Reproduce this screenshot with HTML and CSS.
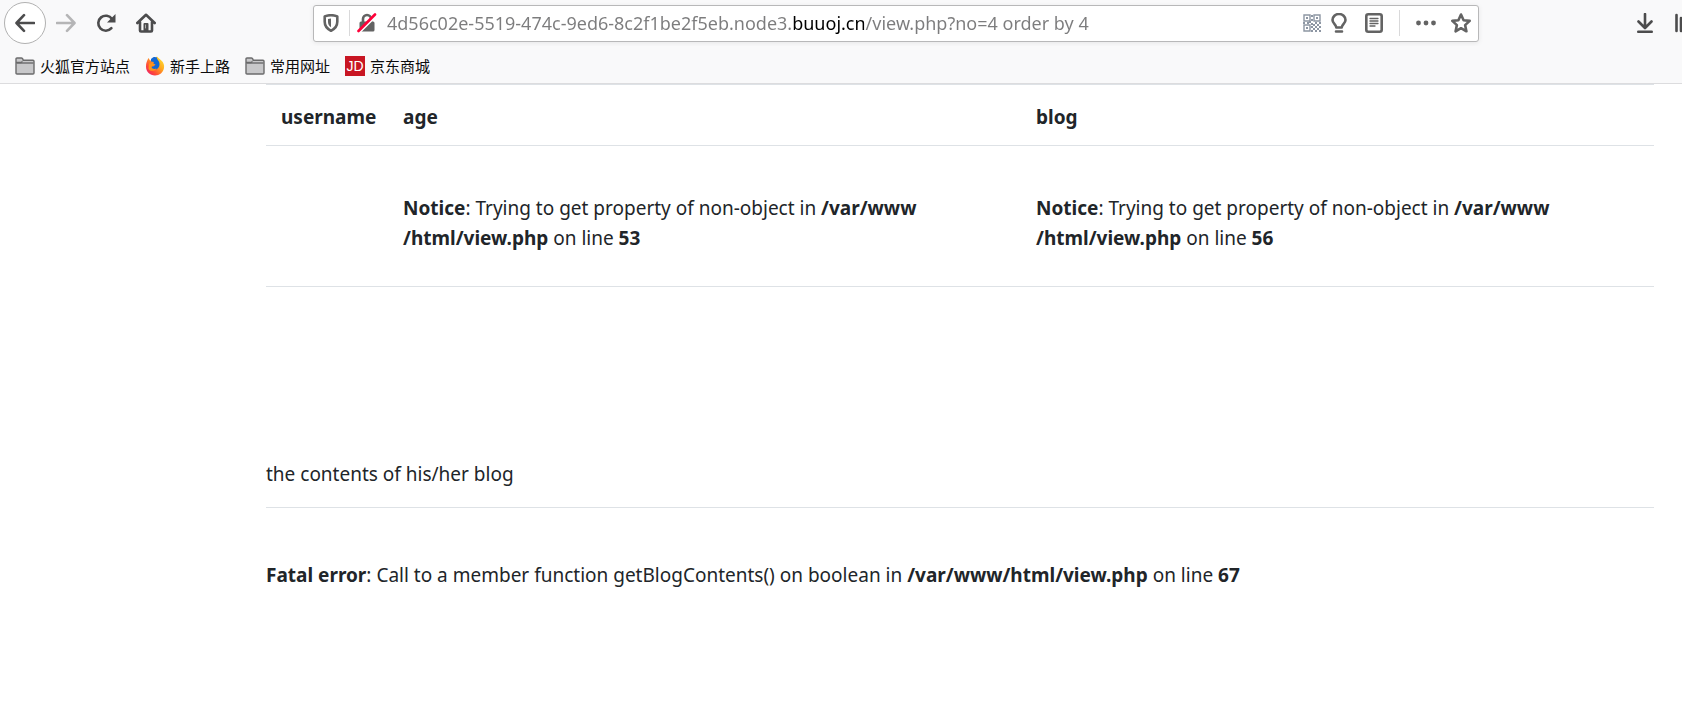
FILE: index.html
```html
<!DOCTYPE html>
<html lang="zh-CN">
<head>
<meta charset="utf-8">
<title>view.php</title>
<link rel="stylesheet" href="styles.css">
</head>
<body>
<header class="browser">
  <div class="toolbar">
    <nav class="nav-buttons" aria-label="导航">
      <button class="tool back" type="button" aria-label="后退">
        <svg width="20" height="20" viewBox="0 0 20 20"><path d="M19 10H2M9 2.2 1.5 10 9 17.8" /></svg>
      </button>
      <button class="tool forward" type="button" aria-label="前进" disabled>
        <svg width="20" height="20" viewBox="0 0 20 20"><path d="M1 10h17M11 2.2l7.5 7.8-7.5 7.8" /></svg>
      </button>
      <button class="tool" type="button" aria-label="刷新">
        <svg width="20" height="20" viewBox="0 0 20 20"><path d="M15.4 15.2A7.5 7.5 0 1 1 16 6" /><path class="solid" d="M19.5 1v8.5H11z" /></svg>
      </button>
      <button class="tool" type="button" aria-label="主页">
        <svg width="20" height="20" viewBox="0 0 20 20"><path d="M1.3 10 10 1.8l8.7 8.2M4 9v8.5q0 1 1 1h10q1 0 1-1V9" /><path class="solid" d="M7.5 18v-7q0-1 1-1h3q1 0 1 1v7z" /><path class="door" d="M9.5 12v3" /></svg>
      </button>
    </nav>
    <form class="urlbar">
      <button class="tool shield" type="button" aria-label="跟踪保护">
        <svg width="18" height="18" viewBox="0 0 18 18"><path d="M9 1.2c2 0 4.300.4 6.300 1.200v5.300c0 4.500-2.800 7.300-6.300 9.100-3.500-1.800-6.300-4.600-6.300-9.100V2.400C4.700 1.600 7 1.200 9 1.200z" /><path class="solid" d="M9 4.600v8.600c-2-1.200-3-3-3-5.200V5.100c1-.3 2-.5 3-.5z" /></svg>
      </button>
      <span class="divider"></span>
      <button class="tool lock" type="button" aria-label="连接不安全">
        <svg width="20" height="20" viewBox="0 0 20 20"><path d="M6 10V6a4 4 0 0 1 8 0v4" /><rect class="solid" x="2.500" y="8.500" width="15" height="10" rx="1.500" /><path class="slash-gap" d="M1.500 20.500 20 2" /><path class="slash" d="M1.500 18 18 1.500" /></svg>
      </button>
      <input class="address" type="text" aria-label="地址" spellcheck="false" value="4d56c02e-5519-474c-9ed6-8c2f1be2f5eb.node3.buuoj.cn/view.php?no=4 order by 4">
      <button class="tool qr" type="button" aria-label="二维码">
        <svg width="18" height="18" viewBox="0 0 18 18"><path d="M1 1h6v6H1zM11 1h6v6h-6zM1 11h6v6H1z" /><path class="solid" d="M3 3h2v2H3zM13 3h2v2h-2zM3 13h2v2H3zM8 1h2v2H8zM8 5h2v2H8zM0 8h2v2H0zM4 8h2v2H4zM6 7h2v2H6zM8 9h2v2H8zM12 8h2v2h-2zM16 8h2v2h-2zM10 10h2v2h-2zM14 10h2v2h-2zM8 12h2v2H8zM12 12h2v2h-2zM16 12h2v2h-2zM10 14h2v2h-2zM14 14h2v2h-2zM8 16h2v2H8zM12 16h2v2h-2zM16 16h2v2h-2z" /></svg>
      </button>
      <button class="tool bulb" type="button" aria-label="提示">
        <svg width="16" height="20" viewBox="0 0 16 20"><path d="M5.300 14.500c0-3-3.800-3.800-3.800-7.500a6.500 6 0 0 1 13 0c0 3.700-3.800 4.500-3.800 7.500zM5 18.500h6" /></svg>
      </button>
      <button class="tool reader" type="button" aria-label="阅读模式">
        <svg width="18" height="20" viewBox="0 0 18 20"><rect x="1.300" y="1.300" width="15.400" height="17.400" rx="2" /><path class="thin" d="M5 5.500h8M5 8h8M5 10.500h8M5 13h5" /></svg>
      </button>
      <span class="divider"></span>
      <button class="tool dots" type="button" aria-label="页面操作">
        <svg width="20" height="20" viewBox="0 0 20 20"><circle class="solid" cx="2.500" cy="10" r="2.400" /><circle class="solid" cx="10" cy="10" r="2.400" /><circle class="solid" cx="17.500" cy="10" r="2.400" /></svg>
      </button>
      <button class="tool star" type="button" aria-label="添加书签">
        <svg width="20" height="20" viewBox="0 0 20 20"><path d="m10 1.500 2.600 5.700 6.100.7-4.600 4.200 1.300 6.200L10 15.200l-5.400 3.100 1.300-6.200L1.300 7.900l6.100-.7z" /></svg>
      </button>
    </form>
    <div class="end-buttons">
      <button class="tool" type="button" aria-label="下载">
        <svg width="16" height="20" viewBox="0 0 16 20"><path d="M8 1v13M1.500 8.500 8 15l6.500-6.500M1.300 18.800h13.400" /></svg>
      </button>
      <button class="tool" type="button" aria-label="我的足迹">
        <svg width="20" height="20" viewBox="0 0 20 20"><path d="M1.500 2v16M6 5v13M10.500 2v16M14 3l4.500 15" /></svg>
      </button>
    </div>
  </div>
  <nav class="bookmarks" aria-label="书签">
    <a class="bookmark" href="#"><svg class="folder" width="20" height="18" viewBox="0 0 20 18"><path d="M1 16V2q0-1 1-1h4.500q1 0 1.300 1l.4 1.300H18q1 0 1 1V16q0 1-1 1H2q-1 0-1-1z" /><path d="M1 5.500h5l1.500-1" /><path d="M1.500 6h17" /></svg>火狐官方站点</a>
    <a class="bookmark" href="#"><svg width="20" height="20" viewBox="0 0 20 20">
      <defs><linearGradient id="flame" x1="1" y1="0" x2="0" y2="1"><stop offset="0" stop-color="#fff23a" /><stop offset=".4" stop-color="#ffa51e" /><stop offset=".7" stop-color="#ff4a38" /><stop offset="1" stop-color="#e4127c" /></linearGradient></defs>
      <path fill="url(#flame)" d="M3.500 2 5 4.500 8 4l4-3.500c1 1.500 3 2.500 4.300 4 2.300 2 3.200 4.500 2.700 7.500-.7 4.500-4.500 7.500-9 7.500C5 19.500 1 16 1 10.500 1 7 2 4.500 3.500 2z" />
      <path fill="#1268d4" d="M6 3c2-2.300 4-2.600 6-1.500-.5 2 2.500 3 2.500 6.500s-2 5.500-5 5.500-4.500-2-4-3.500l3 .5 2-2-2.500-1L9 6 6 5.500z" />
      <path fill="#ff9519" d="M4 7.500 7.500 7l1.500 1-.5 1.500L6.500 11c.5 2 3 2.500 5 1.500-1 2.500-6 3.500-8 .5z" />
    </svg>新手上路</a>
    <a class="bookmark" href="#"><svg class="folder" width="20" height="18" viewBox="0 0 20 18"><path d="M1 16V2q0-1 1-1h4.500q1 0 1.300 1l.4 1.300H18q1 0 1 1V16q0 1-1 1H2q-1 0-1-1z" /><path d="M1 5.500h5l1.500-1" /><path d="M1.500 6h17" /></svg>常用网址</a>
    <a class="bookmark" href="#"><span class="jd">JD</span>京东商城</a>
  </nav>
</header>
<main class="page">
  <table class="users">
    <thead>
      <tr><th class="name" scope="col">username</th><th scope="col">age</th><th scope="col">blog</th></tr>
    </thead>
    <tbody>
      <tr>
        <td></td>
        <td><br><b>Notice</b>: Trying to get property of non-object in <b>/var/www<wbr>/html/view.php</b> on line <b>53</b></td>
        <td><br><b>Notice</b>: Trying to get property of non-object in <b>/var/www<wbr>/html/view.php</b> on line <b>56</b></td>
      </tr>
    </tbody>
  </table>
  <p class="caption">the contents of his/her blog</p>
  <p class="fatal"><b>Fatal error</b>: Call to a member function getBlogContents() on boolean in <b>/var/www/html/view.php</b> on line <b>67</b></p>
</main>
</body>
</html>
```

FILE: styles.css
```css
* {
  box-sizing: border-box;
}

body {
  margin: 0;
  background: #fff;
  color: #212529;
  font-family: "Noto Sans", "Noto Sans CJK SC", sans-serif;
  font-size: 19px;
  line-height: 30px;
  overflow-x: hidden;
}

.browser {
  background: #f9f9fa;
  border-bottom: 1px solid #dcdcde;
}

.toolbar {
  display: flex;
  align-items: center;
  height: 46px;
  padding-left: 4px;
  overflow: hidden;
}

.tool {
  display: flex;
  flex: none;
  align-items: center;
  justify-content: center;
  padding: 0;
  border: 0;
  background: none;
  color: #4c4c4d;
}

.tool svg {
  fill: none;
  stroke: currentColor;
  stroke-width: 2.6;
  stroke-linecap: round;
  stroke-linejoin: round;
}

.tool .solid {
  fill: currentColor;
  stroke: none;
}

.tool .door {
  stroke: #aaa;
  stroke-width: 1;
}

.nav-buttons {
  display: flex;
  align-items: center;
  gap: 20px;
}

.back {
  width: 42px;
  height: 42px;
  border: 1px solid #b1b1b1;
  border-radius: 50%;
  background: #fff;
}

.forward {
  margin-left: -10px;
  color: #b5b5b6;
}

.urlbar {
  display: flex;
  flex: 1;
  align-items: center;
  height: 37px;
  margin: 0 158px 0 157px;
  padding: 0 7px 0 8px;
  border: 1px solid #b8b8b9;
  border-radius: 3px;
  background: #fff;
  box-shadow: 0 1px 5px rgba(0, 0, 0, 0.08);
}

.urlbar .tool {
  color: #636363;
}

.divider {
  flex: none;
  width: 1px;
  height: 26px;
  background: #d9d9da;
}

.shield {
  margin-right: 9px;
}

.lock {
  margin-left: 7px;
}

.tool .slash-gap {
  stroke: #fff;
  stroke-width: 2;
}

.tool .slash {
  stroke: #ff0039;
}

.address {
  flex: 1;
  min-width: 0;
  height: 33px;
  margin-left: 10px;
  padding: 0;
  border: 0;
  outline: 0;
  background: linear-gradient(90deg, #7c7c7d 405px, #000 405px, #000 477px, #7c7c7d 477px);
  -webkit-background-clip: text;
  background-clip: text;
  color: transparent;
  caret-color: #000;
  font: inherit;
  font-size: 18px;
}

.urlbar .qr {
  color: #8d96a3;
}

.qr svg {
  stroke-width: 1.4;
  stroke-linejoin: miter;
}

.bulb {
  margin-left: 10px;
}

.reader {
  margin: 0 16px 0 18px;
}

.tool .thin {
  stroke-width: 1.3;
}

.dots {
  margin-left: 16px;
}

.star {
  margin-left: 15px;
}

.end-buttons {
  display: flex;
  gap: 22px;
  margin-right: -13px;
}

.bookmarks {
  display: flex;
  align-items: center;
  gap: 15px;
  height: 37px;
  padding: 2px 15px 0;
}

.bookmark {
  display: flex;
  align-items: center;
  gap: 5px;
  color: #0c0c0d;
  font-family: "Noto Sans CJK SC", sans-serif;
  font-size: 15px;
  line-height: 20px;
  text-decoration: none;
}

.folder {
  fill: #c8c8ca;
  stroke: #6b6b6c;
  stroke-width: 1.4;
}

.jd {
  width: 20px;
  height: 20px;
  background: #c81623;
  color: #fff;
  font-family: "Liberation Sans", sans-serif;
  font-size: 14px;
  text-align: center;
}

.page {
  padding: 0 28px 0 266px;
}

.users {
  width: 100%;
  border-collapse: collapse;
  border-bottom: 1px solid #dee2e6;
  table-layout: fixed;
}

.users th,
.users td {
  padding: 17px 15px 13px;
  border-top: 1px solid #dee2e6;
  text-align: left;
  vertical-align: top;
}

.users td {
  padding-bottom: 33px;
}

.users .name {
  width: 122px;
}

.caption {
  margin: 172px 0 0;
  padding-bottom: 18px;
  border-bottom: 1px solid #dee2e6;
}

.fatal {
  margin: 52px 0;
}
```
